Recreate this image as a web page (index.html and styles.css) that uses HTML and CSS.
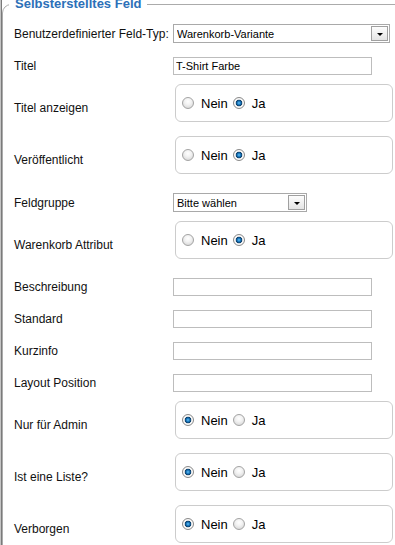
FILE: index.html
```html
<!DOCTYPE html>
<html lang="de">

<head>
    <meta charset="UTF-8">
    <meta name="viewport" content="width=device-width, initial-scale=1.0">
    <title>Selbsterstelltes Feld</title>
    <link rel="stylesheet" href="styles.css">
</head>

<body>
    <div class="page">
        <fieldset class="adminform">
            <legend>Selbsterstelltes Feld</legend>
            <div class="grid">
                <label class="key" for="type">Benutzerdefinierter Feld-Typ:</label>
                <div class="cell">
                    <div class="select wide">
                        <select id="type">
                            <option>Warenkorb-Variante</option>
                        </select>
                        <span class="arrow"></span>
                    </div>
                </div>

                <label class="key" for="title">Titel</label>
                <div class="cell"><input type="text" id="title" class="inputbox" value="T-Shirt Farbe"></div>

                <span class="key">Titel anzeigen</span>
                <div class="cell">
                    <div class="radios">
                        <input type="radio" name="show_title" id="st0"><label for="st0">Nein</label>
                        <input type="radio" name="show_title" id="st1" checked><label for="st1">Ja</label>
                    </div>
                </div>

                <span class="key">Veröffentlicht</span>
                <div class="cell">
                    <div class="radios">
                        <input type="radio" name="published" id="pb0"><label for="pb0">Nein</label>
                        <input type="radio" name="published" id="pb1" checked><label for="pb1">Ja</label>
                    </div>
                </div>

                <label class="key" for="group">Feldgruppe</label>
                <div class="cell">
                    <div class="select small">
                        <select id="group">
                            <option>Bitte wählen</option>
                        </select>
                        <span class="arrow"></span>
                    </div>
                </div>

                <span class="key">Warenkorb Attribut</span>
                <div class="cell">
                    <div class="radios">
                        <input type="radio" name="cart_attr" id="ca0"><label for="ca0">Nein</label>
                        <input type="radio" name="cart_attr" id="ca1" checked><label for="ca1">Ja</label>
                    </div>
                </div>

                <label class="key" for="desc">Beschreibung</label>
                <div class="cell"><input type="text" id="desc" class="inputbox"></div>

                <label class="key" for="default">Standard</label>
                <div class="cell"><input type="text" id="default" class="inputbox"></div>

                <label class="key" for="tip">Kurzinfo</label>
                <div class="cell"><input type="text" id="tip" class="inputbox"></div>

                <label class="key" for="layout">Layout Position</label>
                <div class="cell"><input type="text" id="layout" class="inputbox"></div>

                <span class="key">Nur für Admin</span>
                <div class="cell">
                    <div class="radios">
                        <input type="radio" name="admin_only" id="ao0" checked><label for="ao0">Nein</label>
                        <input type="radio" name="admin_only" id="ao1"><label for="ao1">Ja</label>
                    </div>
                </div>

                <span class="key">Ist eine Liste?</span>
                <div class="cell">
                    <div class="radios">
                        <input type="radio" name="is_list" id="il0" checked><label for="il0">Nein</label>
                        <input type="radio" name="is_list" id="il1"><label for="il1">Ja</label>
                    </div>
                </div>

                <span class="key">Verborgen</span>
                <div class="cell">
                    <div class="radios">
                        <input type="radio" name="hidden" id="hd0" checked><label for="hd0">Nein</label>
                        <input type="radio" name="hidden" id="hd1"><label for="hd1">Ja</label>
                    </div>
                </div>
            </div>
        </fieldset>
    </div>
</body>

</html>
```

FILE: styles.css
```css
html,
body {
    margin: 0;
    overflow: hidden;
    background-color: #ffffff;
}

body {
    font-family: "Liberation Sans", Arial, sans-serif;
    font-size: 12px;
    color: #111111;
}

.page {
    min-height: 100vh;
    border-left: 1px solid #c4c4c4;
    box-shadow: inset 1px 0 0 #7a7a7a;
    padding-left: 1px;
}

.adminform {
    margin: -3px -40px 0 0;
    padding: 6px 0 0 11px;
    border: 1px solid #ababab;
    border-radius: 9px;
}

.adminform legend {
    padding: 0 6px;
    margin-left: -5px;
    font-size: 13px;
    line-height: 14px;
    font-weight: bold;
    color: #2c70b8;
}

.grid {
    display: grid;
    grid-template-columns: 159px 1fr;
    align-items: center;
}

.cell {
    padding: 7px 0;
}

.inputbox {
    display: block;
    box-sizing: border-box;
    width: 199px;
    height: 18px;
    margin: 0;
    padding: 0 2px;
    border: 1px solid #bdbdbd;
    font-family: "Liberation Sans", Arial, sans-serif;
    font-size: 11px;
    color: #000000;
}

.select {
    position: relative;
    height: 19px;
}

.select.wide {
    width: 217px;
}

.select.small {
    width: 134px;
}

.select select {
    appearance: none;
    display: block;
    box-sizing: border-box;
    width: 100%;
    height: 100%;
    margin: 0;
    padding: 0 0 0 3px;
    border: 1px solid #a9a9a9;
    border-radius: 0;
    background: #ffffff;
    font-family: "Liberation Sans", Arial, sans-serif;
    font-size: 11px;
    color: #000000;
}

.arrow {
    position: absolute;
    top: 2px;
    right: 2px;
    width: 15px;
    height: 13px;
    border: 1px solid #a0a0a0;
    background: linear-gradient(#fdfdfd, #e4e4e4);
    pointer-events: none;
}

.arrow::after {
    content: "";
    position: absolute;
    left: 5px;
    top: 6px;
    border-left: 3px solid transparent;
    border-right: 3px solid transparent;
    border-top: 3px solid #000000;
}

.radios {
    display: flex;
    align-items: center;
    box-sizing: border-box;
    width: 218px;
    height: 38px;
    margin: -5px 0 5px 2px;
    padding-left: 6px;
    border: 1px solid #cccccc;
    border-radius: 6px;
    font-size: 13px;
    color: #000000;
}

.radios input {
    appearance: none;
    width: 12px;
    height: 12px;
    margin: 0 7px 0 5px;
    border: 1px solid #a3a3a3;
    border-radius: 50%;
    background: radial-gradient(circle at 50% 35%, #ffffff 0, #f2f2f2 40%, #cfcfcf 100%);
}

.radios input:first-child {
    margin-left: 0;
}

.radios input:checked {
    border-color: #8a8a8a;
    background: radial-gradient(circle at 50% 50%, #6cc4f5 0, #1e7fc6 1.5px, #0b3d68 3px, #e9e9e9 3.6px, #ffffff 4.2px, #cfcfcf 100%);
}
```
